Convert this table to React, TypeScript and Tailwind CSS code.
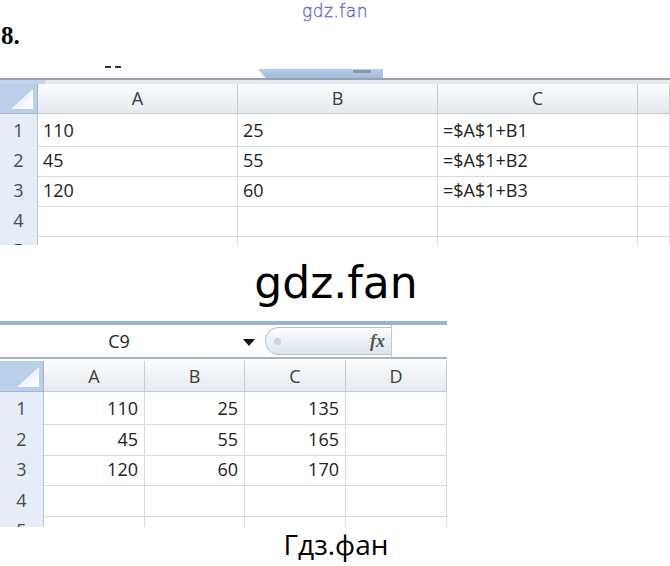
const sheet1Rows = [
  ["1", "110", "25", "=$A$1+B1"],
  ["2", "45", "55", "=$A$1+B2"],
  ["3", "120", "60", "=$A$1+B3"],
  ["4", "", "", ""],
];

const sheet2Rows = [
  { n: "1", a: "110", b: "25", c: "135", h: "h-[31px]" },
  { n: "2", a: "45", b: "55", c: "165", h: "h-[30px]" },
  { n: "3", a: "120", b: "60", c: "170", h: "h-[31px]" },
  { n: "4", a: "", b: "", c: "", h: "h-[30px]" },
];

function Corner() {
  return (
    <div className="h-full bg-[#b9cfea] border-r border-b border-[#9eb6ce] flex items-end justify-end p-[4px]">
      <svg width="22" height="20" viewBox="0 0 22 20">
        <defs>
          <linearGradient id="cg" x1="0" y1="0" x2="1" y2="1">
            <stop offset="0" stopColor="#dce8f6" />
            <stop offset="1" stopColor="#ffffff" />
          </linearGradient>
        </defs>
        <polygon points="22,0 22,20 0,20" fill="url(#cg)" />
      </svg>
    </div>
  );
}

function HeadCell({ label }: { label: string }) {
  return (
    <div className="h-full flex items-center justify-center bg-gradient-to-b from-[#fbfcfd] to-[#e5e9ee] border-r border-b border-[#c3cbd5] text-[#3c3c3c] text-[18px]">
      {label}
    </div>
  );
}

function RowNum({ n }: { n: string }) {
  return (
    <div className="h-full flex items-start justify-center bg-[#e6edf6] border-r border-b border-[#b5c7dc] text-[#4a4a4a] text-[18px] leading-[32px]">
      {n}
    </div>
  );
}

function Cell({ v, right }: { v: string; right?: boolean }) {
  return (
    <div
      className={`h-full border-r border-b border-[#d6dae0] text-[#222] text-[18px] leading-[32px] whitespace-nowrap overflow-hidden ${
        right ? "text-right pr-[6px]" : "pl-[5px]"
      }`}
    >
      {v}
    </div>
  );
}

function SheetOne() {
  return (
    <div className="w-[670px] font-['Open_Sans',sans-serif]">
      {/* cropped formula bar remnant */}
      <div className="h-[23px] flex items-end">
        <div className="ml-[105px] mb-[10px] flex gap-[4px]">
          <div className="w-[6px] h-[2px] bg-[#333]" />
          <div className="w-[6px] h-[2px] bg-[#333]" />
        </div>
        <div className="ml-[137px] w-[125px] h-[9px] bg-gradient-to-b from-[#b7cde9] to-[#9fbce0] [clip-path:polygon(0_0,100%_0,100%_100%,6%_100%)] flex justify-end pr-[12px]">
          <div className="w-[18px] h-[3px] bg-[#8a98a8] mt-[1px]" />
        </div>
      </div>
      <div className="h-[2px] bg-[#9aa4b0]" />
      <div className="h-[4px] flex">
        <div className="w-[45px] bg-[#c3d5ec]" />
        <div className="flex-1 bg-[#e4e9ef]" />
      </div>
      <div className="grid grid-cols-[38px_200px_200px_200px_32px] h-[30px]">
        <Corner />
        <HeadCell label="A" />
        <HeadCell label="B" />
        <HeadCell label="C" />
        <HeadCell label="" />
      </div>
      {sheet1Rows.map((r) => (
        <div key={r[0]} className="grid grid-cols-[38px_200px_200px_200px_32px] h-[30px]">
          <RowNum n={r[0]} />
          <Cell v={r[1]} />
          <Cell v={r[2]} />
          <Cell v={r[3]} />
          <Cell v="" />
        </div>
      ))}
      <div className="h-[11px] overflow-hidden">
        <div className="grid grid-cols-[38px_200px_200px_200px_32px] h-[30px]">
          <RowNum n="5" />
          <Cell v="" />
          <Cell v="" />
          <Cell v="" />
          <Cell v="" />
        </div>
      </div>
    </div>
  );
}

function SheetTwo() {
  return (
    <div className="w-[447px] font-['Open_Sans',sans-serif]">
      <div className="h-[4px] bg-[#9bb3cf]" />
      <div className="h-[32px] flex items-center bg-white">
        <div className="w-[238px] text-center text-[18px] text-[#222]">C9</div>
        <svg width="12" height="8" viewBox="0 0 12 8" className="ml-[5px] mt-[4px]">
          <polygon points="0,0 12,0 6,7" fill="#111" />
        </svg>
        <div className="ml-[10px] h-[28px] w-[126px] rounded-l-[14px] border border-r-0 border-[#b9c4d2] bg-gradient-to-b from-[#fdfeff] to-[#dbe3ed] flex items-center justify-between pl-[8px] pr-[6px]">
          <div className="w-[7px] h-[7px] rounded-full bg-[#c9d3df]" />
          <span className="font-['Liberation_Serif',serif] italic text-[18px] text-[#555] font-bold">fx</span>
        </div>
        <div className="w-px h-full bg-[#c2c9d2]" />
      </div>
      <div className="h-[2px] bg-[#a9b2bd]" />
      <div className="h-[2px] bg-white" />
      <div className="grid grid-cols-[44px_101px_100px_101px_101px] h-[31px]">
        <Corner />
        <HeadCell label="A" />
        <HeadCell label="B" />
        <HeadCell label="C" />
        <HeadCell label="D" />
      </div>
      {sheet2Rows.map((r) => (
        <div key={r.n} className={`grid grid-cols-[44px_101px_100px_101px_101px] ${r.h}`}>
          <RowNum n={r.n} />
          <Cell v={r.a} right />
          <Cell v={r.b} right />
          <Cell v={r.c} right />
          <Cell v="" />
        </div>
      ))}
      <div className="h-[13px] overflow-hidden">
        <div className="grid grid-cols-[44px_101px_100px_101px_101px] h-[30px]">
          <RowNum n="5" />
          <Cell v="" />
          <Cell v="" />
          <Cell v="" />
          <Cell v="" />
        </div>
      </div>
    </div>
  );
}

export default function App() {
  return (
    <div className="w-[670px] h-[566px] bg-white overflow-hidden flex flex-col">
      <div className="h-[22px] text-center text-[17px] leading-[22px] font-['DejaVu_Sans',sans-serif] font-light text-white [-webkit-text-stroke:0.5px_#5050dc] tracking-[0.5px]">
        gdz.fan
      </div>
      <div className="h-[33px] pl-[1px] font-['Liberation_Serif',serif] font-bold text-[25px] leading-[28px] text-black">
        8.
      </div>
      <SheetOne />
      <div className="h-[76px] flex items-center justify-center font-['DejaVu_Sans',sans-serif] text-[44px] text-black leading-none pl-[2px]">
        gdz.fan
      </div>
      <SheetTwo />
      <div className="flex-1 flex justify-center font-['Open_Sans',sans-serif] text-[28px] text-black leading-[34px] pl-[2px]">
        Гдз.фан
      </div>
    </div>
  );
}
